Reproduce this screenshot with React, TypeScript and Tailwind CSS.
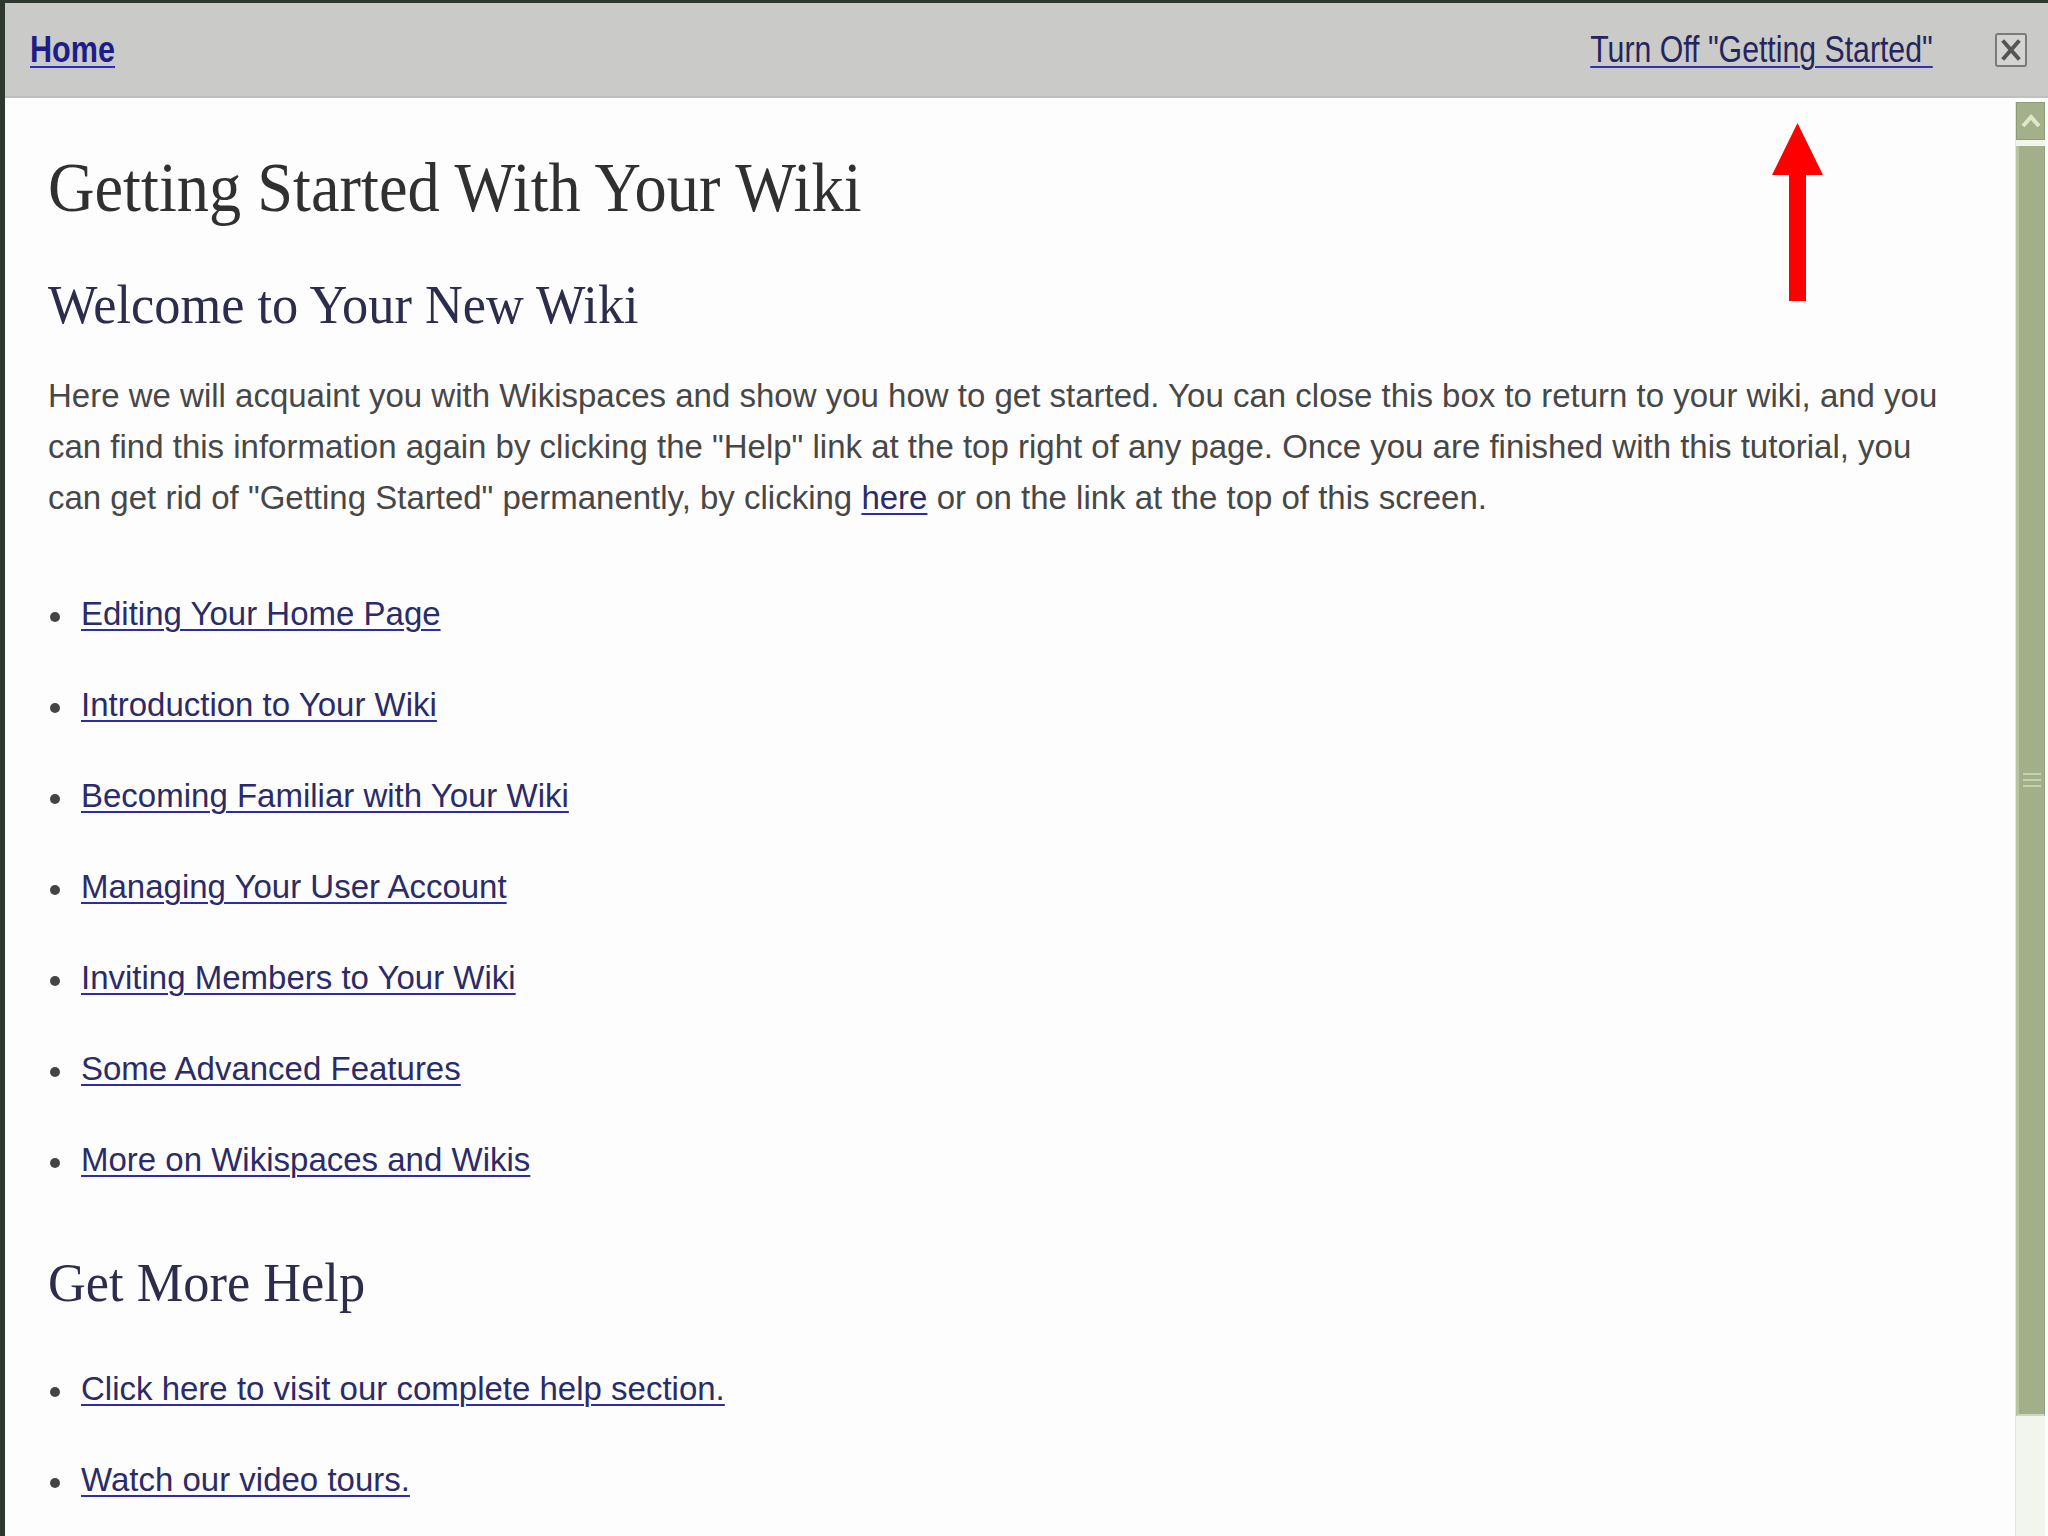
import React from "react";

const sans = "font-['Liberation_Sans',Arial,sans-serif]";

function Bullet({ children }: { children: React.ReactNode }) {
  return (
    <li className="flex items-center leading-[91px] h-[91px]">
      <span className="inline-block w-[10px] h-[10px] rounded-full bg-[#444444] ml-[2px] mr-[21px] mt-[7px] shrink-0" />
      <a
        href="#"
        className="text-[#2b2b68] underline decoration-[#2c2ca8] decoration-[2px] underline-offset-[4px] whitespace-nowrap"
      >
        {children}
      </a>
    </li>
  );
}

export default function App() {
  return (
    <div className="relative w-[2048px] h-[1536px] overflow-hidden bg-[#fdfdfd] border-l-[5px] border-t-[3px] border-[#2e382f] flex flex-col">
      {/* Header bar */}
      <div className="h-[95px] shrink-0 bg-[#cacac8] border-b-[2px] border-[#c0c1bd] flex items-center pl-[25px] pr-[21px]">
        <a
          href="#"
          className={`inline-block origin-left scale-x-[0.85] ${sans} font-bold text-[36px] leading-[36px] text-[#1d1d8a] underline decoration-[#2a2ad0] decoration-[2px] underline-offset-[4px]`}
        >
          Home
        </a>
        <a
          href="#"
          className={`ml-auto inline-block origin-right scale-x-[0.84] ${sans} text-[36px] leading-[36px] text-[#25255e] underline decoration-[#3030b0] decoration-[2px] underline-offset-[4px] whitespace-nowrap`}
        >
          Turn Off &quot;Getting Started&quot;
        </a>
        <button className="ml-[62px] w-[32px] h-[34px] border-2 border-[#7b7b7b] rounded-[3px] bg-[#d4d4d2] flex items-center justify-center">
          <svg width="20" height="22" viewBox="0 0 20 22">
            <path d="M3 3 L17 19 M17 3 L3 19" stroke="#555" strokeWidth="4" strokeLinecap="square" />
          </svg>
        </button>
      </div>

      {/* Body */}
      <div className="flex-1 flex min-h-0">
        <main className={`flex-1 min-w-0 pl-[43px] overflow-hidden ${sans}`}>
          <h1 className="mt-[55px] origin-left scale-x-[0.92] font-['Liberation_Serif','Times_New_Roman',serif] text-[70px] leading-[70px] text-[#303030] whitespace-nowrap">
            Getting Started With Your Wiki
          </h1>
          <h2 className="mt-[55px] origin-left scale-x-[0.97] font-['Liberation_Serif','Times_New_Roman',serif] text-[54px] leading-[54px] text-[#2c2c4c] whitespace-nowrap">
            Welcome to Your New Wiki
          </h2>
          <p className="mt-[38px] text-[33px] leading-[51px] text-[#474747] whitespace-nowrap">
            Here we will acquaint you with Wikispaces and show you how to get started. You can close this box to return to your wiki, and you
            <br />
            can find this information again by clicking the &quot;Help&quot; link at the top right of any page. Once you are finished with this tutorial, you
            <br />
            can get rid of &quot;Getting Started&quot; permanently, by clicking{" "}
            <a href="#" className="text-[#2b2b68] underline decoration-[#2c2ca8] decoration-[2px] underline-offset-[4px]">
              here
            </a>{" "}
            or on the link at the top of this screen.
          </p>
          <ul className="mt-[45px] text-[33px]">
            <Bullet>Editing Your Home Page</Bullet>
            <Bullet>Introduction to Your Wiki</Bullet>
            <Bullet>Becoming Familiar with Your Wiki</Bullet>
            <Bullet>Managing Your User Account</Bullet>
            <Bullet>Inviting Members to Your Wiki</Bullet>
            <Bullet>Some Advanced Features</Bullet>
            <Bullet>More on Wikispaces and Wikis</Bullet>
          </ul>
          <h2 className="mt-[51px] origin-left scale-x-[0.97] font-['Liberation_Serif','Times_New_Roman',serif] text-[54px] leading-[54px] text-[#2c2c4c] whitespace-nowrap">
            Get More Help
          </h2>
          <ul className="mt-[33px] text-[33px]">
            <Bullet>Click here to visit our complete help section.</Bullet>
            <Bullet>Watch our video tours.</Bullet>
          </ul>
        </main>

        {/* Scrollbar */}
        <div className="w-[30px] mr-[3px] mt-[4px] flex flex-col bg-[#f2f4ee] border-l border-[#e2e6da]">
          <div className="h-[38px] bg-[#a3b08a] border border-[#8e9b76] flex items-center justify-center">
            <svg width="22" height="18" viewBox="0 0 22 18">
              <path d="M3 14 L11 5 L19 14" fill="none" stroke="#dfe8cd" strokeWidth="4" />
            </svg>
          </div>
          <div className="mt-[6px] h-[1270px] bg-[#a2af89] border-l-[3px] border-r border-b-2 border-l-[#b8c4a0] border-r-[#94a07c] border-b-[#cfd6c2] flex flex-col items-center justify-center gap-[4px]">
            <div className="w-[18px] h-[2px] bg-[#c6d0b2]" />
            <div className="w-[18px] h-[2px] bg-[#c6d0b2]" />
            <div className="w-[18px] h-[2px] bg-[#c6d0b2]" />
          </div>
          <div className="flex-1" />
        </div>
      </div>

      {/* Red annotation arrow */}
      <svg className="absolute left-[1767px] top-[120px]" width="51" height="178" viewBox="0 0 51 178">
        <polygon points="25.5,0 51,52 34,52 34,178 17,178 17,52 0,52" fill="#ff0000" />
      </svg>
    </div>
  );
}
